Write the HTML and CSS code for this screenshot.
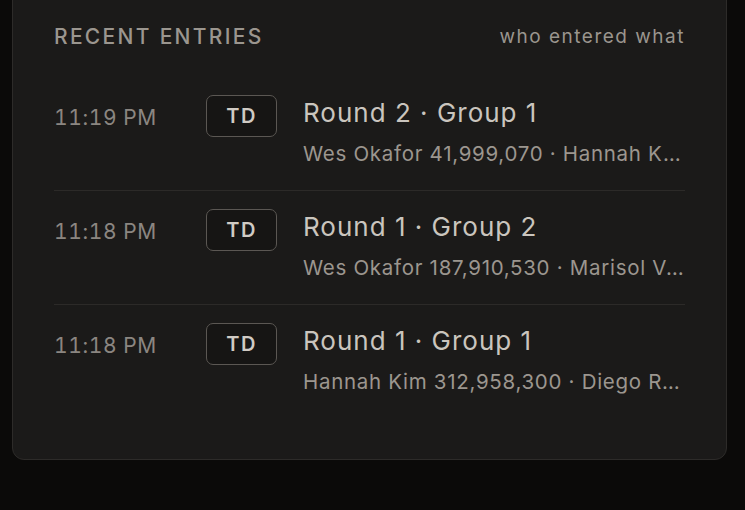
FILE: index.html
```html
<!DOCTYPE html>
<html lang="en">
<head>
  <meta charset="UTF-8" />
  <meta name="viewport" content="width=device-width, initial-scale=1.0"/>
  <title>Recent entries</title>
  <link rel="stylesheet" href="styles.css">
</head>
<body>

  <div class="page">
    <div class="card">
      <div class="card-head">
        <span class="card-title">Recent entries</span>
        <span class="card-note">who entered what</span>
      </div>

      <div class="entry">
        <div class="entry-time">11:19 PM</div>
        <div class="entry-badge">TD</div>
        <div class="entry-body">
          <div class="entry-title">Round 2 · Group 1</div>
          <div class="entry-sub">Wes Okafor 41,999,070 · Hannah Kim 38,402,115 · Diego Ruiz 22,310,400</div>
        </div>
      </div>

      <div class="entry">
        <div class="entry-time">11:18 PM</div>
        <div class="entry-badge">TD</div>
        <div class="entry-body">
          <div class="entry-title">Round 1 · Group 2</div>
          <div class="entry-sub">Wes Okafor 187,910,530 · Marisol Vega 140,220,800 · Hannah Kim 98,100,000</div>
        </div>
      </div>

      <div class="entry">
        <div class="entry-time">11:18 PM</div>
        <div class="entry-badge">TD</div>
        <div class="entry-body">
          <div class="entry-title">Round 1 · Group 1</div>
          <div class="entry-sub">Hannah Kim 312,958,300 · Diego Ruiz 201,440,090 · Wes Okafor 150,000,000</div>
        </div>
      </div>
    </div>
  </div>

</body>
</html>
```

FILE: styles.css
```css
body {
  font-family: Inter, 'Noto Sans', sans-serif;
  background: #0b0a09;
  margin: 0;
}

.page {
  padding: 0 18px 0 12px;
}

.card {
  margin-top: -18px;
  background: #1b1a19;
  border: 1px solid #2d2b29;
  border-radius: 12px;
  padding: 41px;
}

.card-head {
  display: flex;
  justify-content: space-between;
  align-items: center;
  line-height: 26px;
  margin-bottom: 27px;
}

.card-title {
  text-transform: uppercase;
  font-size: 21px;
  letter-spacing: 2.3px;
  color: #9b968f;
  font-weight: 500;
}

.card-note {
  font-size: 19px;
  letter-spacing: 1.5px;
  color: #9a958e;
}

.entry {
  display: grid;
  grid-template-columns: 152px 71px 1fr;
  padding: 18px 0 22px;
  border-bottom: 1px solid #2c2a28;
}

.entry:last-child {
  border-bottom: none;
}

.entry-time {
  font-size: 21px;
  line-height: 46px;
  letter-spacing: 0.6px;
  font-variant-numeric: tabular-nums;
  color: #8b8681;
}

.entry-badge {
  box-sizing: border-box;
  height: 42px;
  line-height: 40px;
  text-align: center;
  border: 1.5px solid #5b5753;
  border-radius: 7px;
  background: #161514;
  color: #d0cbc4;
  font-size: 20px;
  font-weight: 600;
  letter-spacing: 1.5px;
}

.entry-body {
  padding-left: 26px;
  min-width: 0;
}

.entry-title {
  font-size: 26px;
  line-height: 36px;
  letter-spacing: 1px;
  color: #cac5be;
}

.entry-sub {
  margin-top: 9px;
  font-size: 20.5px;
  line-height: 28px;
  letter-spacing: 0.7px;
  color: #9c968f;
  white-space: nowrap;
  overflow: hidden;
  text-overflow: ellipsis;
}
```
